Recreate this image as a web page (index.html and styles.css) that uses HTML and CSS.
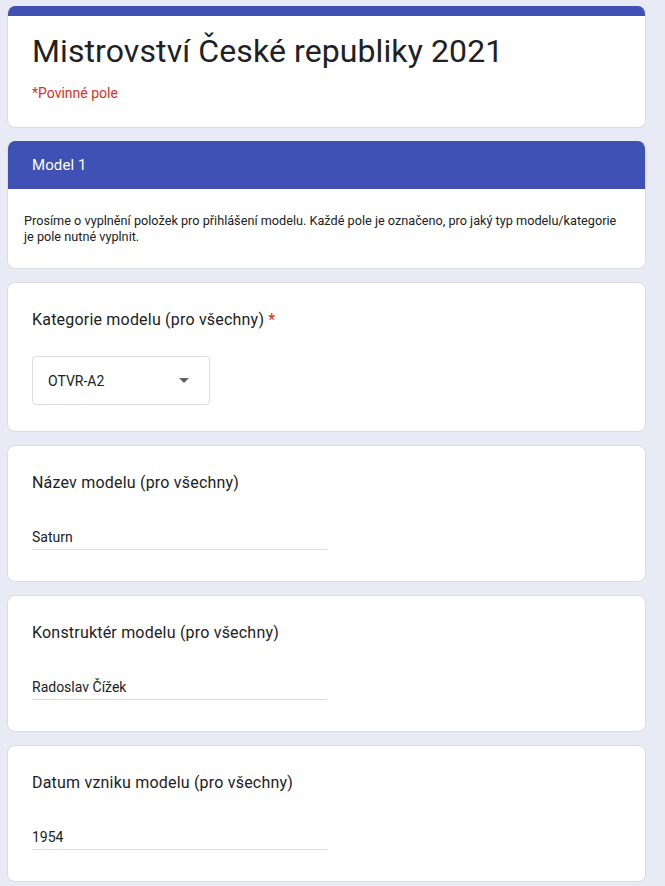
FILE: index.html
```html
<!DOCTYPE html>
<html lang="cs">
<head>
<meta charset="utf-8">
<title>Mistrovství České republiky 2021</title>
<link rel="stylesheet" href="styles.css">
</head>
<body>
<div class="page">
  <div class="card head-card">
    <div class="top-bar"></div>
    <div class="head-body">
      <h1 class="form-title">Mistrovství České republiky 2021</h1>
      <div class="required-note">*Povinné pole</div>
    </div>
  </div>

  <div class="card section-card">
    <div class="section-header">Model 1</div>
    <div class="section-desc">Prosíme o vyplnění položek pro přihlášení modelu. Každé pole je označeno, pro jaký typ modelu/kategorie je pole nutné vyplnit.</div>
  </div>

  <div class="card question">
    <div class="q-label">Kategorie modelu (pro všechny) <span class="req">*</span></div>
    <div class="select">
      <span class="select-value">OTVR-A2</span>
      <svg class="select-arrow" width="10" height="5" viewBox="0 0 10 5"><path d="M0 0h10L5 5z" fill="#5f6368"/></svg>
    </div>
  </div>

  <div class="card question">
    <div class="q-label">Název modelu (pro všechny)</div>
    <div class="text-input">Saturn</div>
  </div>

  <div class="card question">
    <div class="q-label">Konstruktér modelu (pro všechny)</div>
    <div class="text-input">Radoslav Čížek</div>
  </div>

  <div class="card question">
    <div class="q-label">Datum vzniku modelu (pro všechny)</div>
    <div class="text-input">1954</div>
  </div>
</div>
</body>
</html>
```

FILE: styles.css
```css
html, body {
  margin: 0;
  padding: 0;
  background: #e8eaf6;
}
body {
  font-family: Roboto, "Noto Sans", Arial, sans-serif;
  color: #202124;
}
.page {
  width: 639px;
  margin: 6px 0 0 7px;
  display: flex;
  flex-direction: column;
  gap: 13px;
}
.card {
  background: #fff;
  border: 1px solid #dadce0;
  border-radius: 8px;
  box-sizing: border-box;
  overflow: hidden;
}
.head-card {
  height: 122px;
  border-top: none;
}
.top-bar {
  height: 10px;
  background: #3f51b5;
}
.head-body {
  padding: 15px 24px 0 24px;
}
.form-title {
  margin: 0;
  font-family: Roboto, "Open Sans", sans-serif;
  font-weight: 400;
  font-size: 32px;
  line-height: 40px;
  letter-spacing: 0.1px;
  color: #202124;
}
.required-note {
  margin-top: 12px;
  font-size: 14px;
  line-height: 20px;
  color: #d93025;
}
.section-card {
  height: 128px;
  border-top: none;
}
.section-header {
  height: 48px;
  background: #3f51b5;
  color: #fff;
  font-size: 15px;
  line-height: 48px;
  padding: 0 24px;
  letter-spacing: 0.1px;
}
.section-desc {
  padding: 24px 16px 0 16px;
  font-size: 12.7px;
  line-height: 16px;
  color: #202124;
}
.question {
  padding: 25px 24px 0 24px;
  height: 137px;
}
.question:nth-child(3) {
  height: 150px;
}
.q-label {
  font-size: 16px;
  line-height: 24px;
  letter-spacing: 0.2px;
  color: #202124;
}
.req {
  color: #d93025;
}
.select {
  margin-top: 24px;
  width: 178px;
  height: 49px;
  box-sizing: border-box;
  border: 1px solid #dadce0;
  border-radius: 4px;
  display: flex;
  align-items: center;
  justify-content: space-between;
  padding: 0 20px 0 15px;
  font-size: 14px;
}
.select-arrow {
  display: block;
}
.text-input {
  margin-top: 32px;
  width: 295px;
  font-size: 14px;
  line-height: 20px;
  padding-bottom: 2px;
  border-bottom: 1px solid #dadce0;
}
```
